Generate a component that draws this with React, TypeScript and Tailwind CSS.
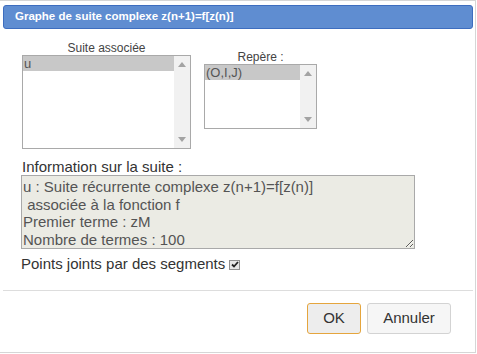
import React from 'react';

const ScrollTrack: React.FC = () => (
  <div className="w-[16px] self-stretch bg-[#f1f1f1] flex flex-col items-center justify-between py-[6px]">
    <svg width="8" height="5" viewBox="0 0 8 5">
      <path d="M4 0 L8 5 L0 5 Z" fill="#a3a3a3" />
    </svg>
    <svg width="8" height="5" viewBox="0 0 8 5">
      <path d="M0 0 L8 0 L4 5 Z" fill="#a3a3a3" />
    </svg>
  </div>
);

const ListBox: React.FC<{ items: string[]; width: string; height: string }> = ({ items, width, height }) => (
  <div className={`flex border border-[#a9a9a9] bg-white ${width} ${height}`}>
    <div className="flex-1">
      {items.map((it, i) => (
        <div
          key={i}
          className={`h-[15px] pl-px text-[13px] leading-[15px] text-[#555] ${i === 0 ? 'bg-[#c8c8c8]' : ''}`}
        >
          {it}
        </div>
      ))}
    </div>
    <ScrollTrack />
  </div>
);

const App: React.FC = () => {
  const info = 'u : Suite récurrente complexe z(n+1)=f[z(n)]\n associée à la fonction f\nPremier terme : zM\nNombre de termes : 100';

  return (
    <div className="w-[477px] h-[354px] bg-white font-['Liberation_Sans',Arial,sans-serif]">
      <div className="w-[476px] h-[353px] border-t border-r border-b border-[#d6d6d6] pt-[4px] pl-[3px] pr-[2px] flex flex-col">
        <div className="h-[24px] rounded-[3px] border border-[#3d6dbf] bg-[#5f8dd1] flex items-center pl-[11px]">
          <span className="text-[11.5px] font-bold text-white">Graphe de suite complexe z(n+1)=f[z(n)]</span>
        </div>

        <div className="pl-[19px] pt-[12px]">
          <div className="flex items-start gap-[13px]">
            <div className="flex flex-col">
              <div className="text-center text-[12px] leading-[14px] text-[#444]">Suite associée</div>
              <ListBox items={['u']} width="w-[169px]" height="h-[94px]" />
            </div>
            <div className="flex flex-col mt-[9px]">
              <div className="text-center text-[12px] leading-[14px] text-[#444]">Repère :</div>
              <ListBox items={['(O,I,J)']} width="w-[113px]" height="h-[65px]" />
            </div>
          </div>

          <div className="mt-[9px] text-[15px] leading-[17px] text-[#333]">Information sur la suite :</div>
          <textarea
            readOnly
            value={info}
            className="-ml-px block w-[394px] h-[74px] border border-[#a9a9a9] bg-[#ebebe4] px-px pt-[2px] text-[15px] leading-[17.7px] text-[#545454] outline-none overflow-hidden"
          />

          <div className="-ml-[1px] mt-[6px] flex items-center text-[15px] leading-[17px] text-[#333]">
            <span>Points joints par des segments</span>
            <span className="ml-[4px] mt-[2px] w-[11px] h-[10px] border border-[#8f8f8f] bg-[#e6e6e6] flex items-center justify-center">
              <svg width="8" height="7" viewBox="0 0 8 7">
                <path d="M1 3.5 L3 5.5 L7 1" stroke="#222" strokeWidth="1.8" fill="none" />
              </svg>
            </span>
          </div>
        </div>

        <div className="mt-[18px] h-px bg-[#dddddd]" />

        <div className="flex justify-end gap-[6px] pr-[22px] pt-[12px]">
          <button className="w-[54px] h-[31px] rounded-[3px] border border-[#e5a53d] bg-[#ededed] text-[15px] text-[#333]">
            OK
          </button>
          <button className="w-[84px] h-[31px] rounded-[3px] border border-[#d3d3d3] bg-[#f6f6f6] text-[15px] text-[#333]">
            Annuler
          </button>
        </div>
      </div>
    </div>
  );
};

export default App;
